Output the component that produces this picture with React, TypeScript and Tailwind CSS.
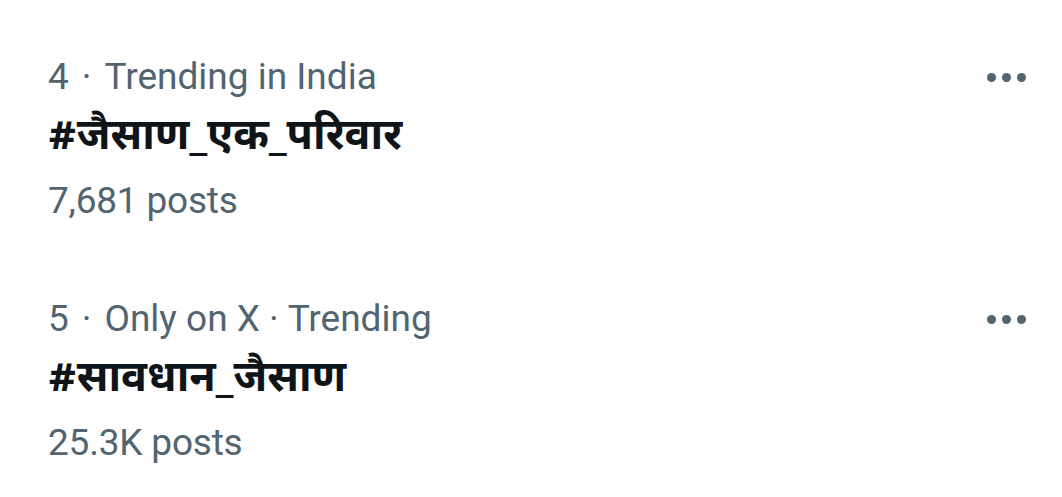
export default function App() {
  const items = [
    { rank: "4", meta: ["Trending in India"], tag: "#जैसाण_एक_परिवार", posts: "7,681 posts" },
    { rank: "5", meta: ["Only on X", "Trending"], tag: "#सावधान_जैसाण", posts: "25.3K posts" },
  ];
  return (
    <div className="w-[1062px] h-[497px] bg-white overflow-hidden pt-[18px]" style={{ fontFamily: "Roboto, 'Noto Sans', sans-serif" }}>
      {items.map((it, i) => (
        <div key={i} className="flex justify-between pl-[48px] pr-[36px] py-[28px]">
          <div className="flex flex-col text-[37px] leading-[62px]">
            <div className="text-[#536471]">
              {it.rank}
              <span className="mx-[13px]">·</span>
              {it.meta[0]}
              {it.meta[1] && (
                <>
                  <span className="mx-[9px]">·</span>
                  {it.meta[1]}
                </>
              )}
            </div>
            <div className="text-[#0f1419] font-bold text-[43px]" style={{ fontFamily: "'Noto Sans Devanagari', 'Noto Sans', Roboto, sans-serif" }}>{it.tag}</div>
            <div className="text-[#536471] tracking-[-0.2px]">{it.posts}</div>
          </div>
          <div className="flex gap-[6px] h-[62px] items-center">
            <span className="w-[9px] h-[9px] rounded-full bg-[#536471]" />
            <span className="w-[9px] h-[9px] rounded-full bg-[#536471]" />
            <span className="w-[9px] h-[9px] rounded-full bg-[#536471]" />
          </div>
        </div>
      ))}
    </div>
  );
}
